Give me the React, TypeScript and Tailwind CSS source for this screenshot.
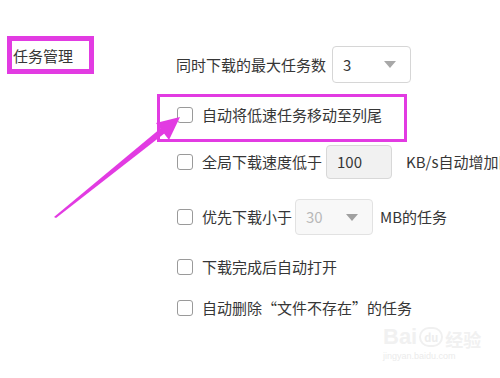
import React from "react";

const Checkbox = () => (
  <span className="block w-[16px] h-[16px] shrink-0 rounded-[3px] border border-[#9a9a9a] bg-white" />
);

const Caret = ({ color }: { color: string }) => (
  <svg width="12" height="7" viewBox="0 0 12 7" className="shrink-0">
    <path d="M0 0 L12 0 L6 7 Z" fill={color} />
  </svg>
);

export default function App() {
  return (
    <div
      className="relative w-[500px] h-[378px] bg-white overflow-hidden text-[15px] leading-[20px] text-[#363636]"
      style={{ fontFamily: '"Noto Sans CJK SC", "Noto Sans", sans-serif' }}
    >
      <div className="flex">
        {/* left column */}
        <div className="pl-[7px] pt-[36px] w-[157px] shrink-0">
          <div className="w-[87px] h-[38px] border-[5px] border-[#e23be2] flex items-center pl-[1px] pt-[1px]">
            <span className="whitespace-nowrap">任务管理</span>
          </div>
        </div>

        {/* right column */}
        <div className="pt-[46px] flex flex-col">
          <div className="h-[37px] flex items-center pl-[19px]">
            <span className="whitespace-nowrap">同时下载的最大任务数</span>
            <div className="ml-[6px] w-[79px] h-[37px] border border-[#d6d6d6] rounded-[4px] bg-white flex items-center justify-between pl-[10px] pr-[14px]">
              <span>3</span>
              <Caret color="#a8a8a8" />
            </div>
          </div>

          <div className="mt-[11px] w-[250px] h-[48px] border-[3px] border-[#e23be2] pl-[17px] pt-[8px]">
            <div className="flex items-center gap-[9px]">
              <Checkbox />
              <span className="whitespace-nowrap">自动将低速任务移动至列尾</span>
            </div>
          </div>

          <div className="mt-[3px] h-[34px] flex items-center pl-[20px]">
            <Checkbox />
            <span className="ml-[9px] whitespace-nowrap">全局下载速度低于</span>
            <div className="ml-[4px] w-[66px] h-[34px] border border-[#d8d8d8] rounded-[4px] bg-[#f1f1f1] flex items-center pl-[10px]">
              100
            </div>
            <span className="ml-[14px] whitespace-nowrap">KB/s自动增加队列</span>
          </div>

          <div className="mt-[20px] h-[36px] flex items-center pl-[20px]">
            <Checkbox />
            <span className="ml-[9px] whitespace-nowrap">优先下载小于</span>
            <div className="ml-[3px] w-[78px] h-[36px] border border-[#e2e2e2] rounded-[4px] bg-[#f8f8f8] flex items-center justify-between pl-[10px] pr-[14px] text-[#b8b8b8]">
              <span>30</span>
              <Caret color="#a0a0a0" />
            </div>
            <span className="ml-[7px] whitespace-nowrap">MB的任务</span>
          </div>

          <div className="mt-[22px] h-[20px] flex items-center pl-[20px]">
            <Checkbox />
            <span className="ml-[9px] whitespace-nowrap">下载完成后自动打开</span>
          </div>

          <div className="mt-[21px] h-[20px] flex items-center pl-[20px]">
            <Checkbox />
            <span className="ml-[9px] whitespace-nowrap">自动删除“文件不存在”的任务</span>
          </div>
        </div>
      </div>

      {/* annotation arrow */}
      <svg
        className="absolute left-0 top-0 pointer-events-none"
        width="500"
        height="378"
        viewBox="0 0 500 378"
      >
        <polygon points="54,217 161,128 165,133 56,218" fill="#e23be2" />
        <polygon points="180,117 156,123 169,140" fill="#e23be2" />
      </svg>

      {/* watermark */}
      <div className="absolute left-[383px] top-[326px] flex flex-col items-start pointer-events-none select-none">
        <div className="flex items-end leading-none">
          <span className="text-[22px] font-bold text-[#f1f1f1]" style={{ fontFamily: '"Liberation Sans", sans-serif' }}>Bai</span>
          <span className="ml-[2px] mb-[1px] w-[24px] h-[20px] rounded-[10px] border-2 border-[#f0f0f0] text-[11px] font-bold text-[#ededed] flex items-center justify-center">du</span>
          <span className="ml-[2px] text-[18px] font-bold text-[#f1f1f1]">经验</span>
        </div>
        <span className="mt-[4px] text-[9px] leading-none text-[#ebebeb]" style={{ fontFamily: '"Liberation Sans", sans-serif' }}>jingyan.baidu.com</span>
      </div>
    </div>
  );
}
